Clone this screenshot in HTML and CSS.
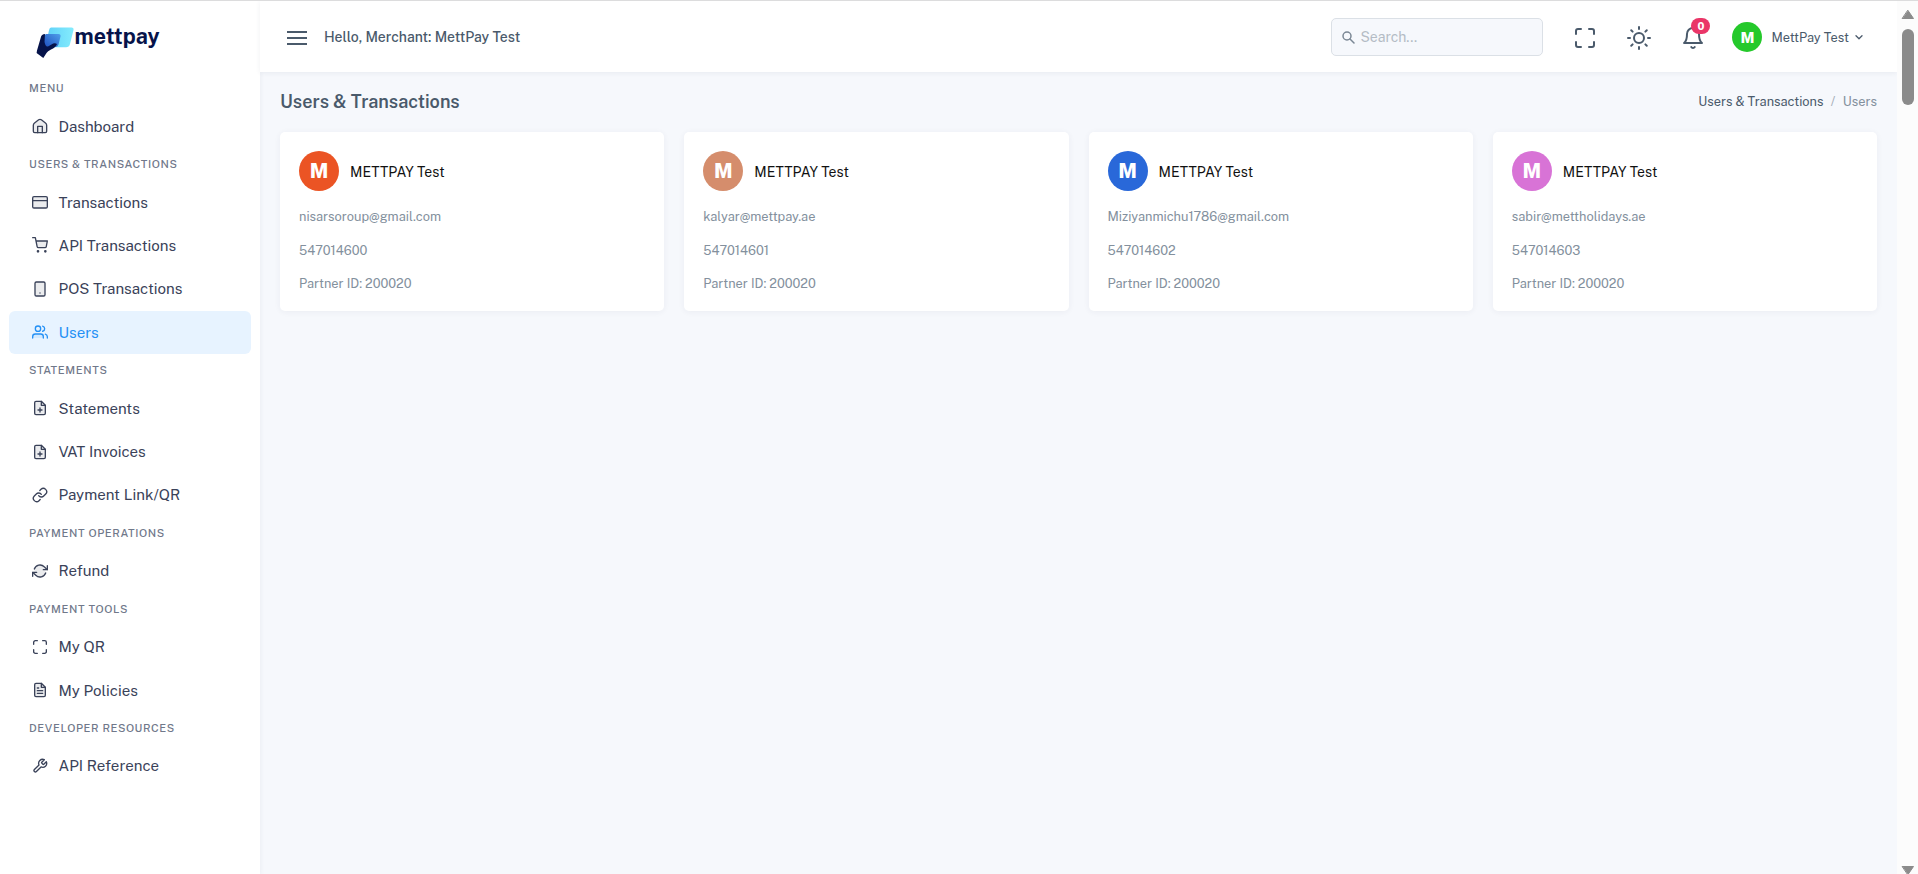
FILE: index.html
```html
<!DOCTYPE html>
<html lang="en">
<head>
    <meta charset="UTF-8">
    <meta name="viewport" content="width=device-width, initial-scale=1.0">
    <title>Users | MettPay</title>
    <link rel="stylesheet" href="styles.css">
</head>
<body>
    <aside class="sidebar">
        <a class="logo" href="#">
            <svg width="140" height="50" viewBox="0 -10 140 50">
                <defs>
                    <linearGradient id="cardBack" x1="0" y1="0" x2="1" y2="0">
                        <stop offset="0" stop-color="#5fd0f8"/>
                        <stop offset="1" stop-color="#84ecfd"/>
                    </linearGradient>
                    <linearGradient id="cardFront" x1="1" y1="0" x2="0" y2="1">
                        <stop offset="0" stop-color="#4f9fea"/>
                        <stop offset="1" stop-color="#1f4fc0"/>
                    </linearGradient>
                </defs>
                <path d="M15 .5h20.500q2.500 0 2 2.500l-3.500 14q-.8 3.300-4 3.300H12q-3 0-2-3l3-14Q13.500.500 15 .5z" fill="url(#cardBack)"/>
                <path d="M10 7H22.500q2.500 0 2 2.500l-2 8q-.800 2.500-3.500 2.500H12Q7.500 20 8 15.500V8.500z" fill="url(#cardFront)"/>
                <path d="M9 7Q5.500 7 4.800 10.500L1 23.500 .6 26l6.700 5 3.200-5q1-2 4.500-3.500 4.500-2 6-5.500-2.500-1.500-5.500.500l-3.500 2Q9.500 20 8.500 15z" fill="#06134a"/>
                <text class="logo-text" x="38.500" y="17" textLength="85" lengthAdjust="spacingAndGlyphs">mettpay</text>
            </svg>
        </a>

        <nav class="menu">
            <h6 class="menu-title">Menu</h6>
            <a class="menu-item" href="#">
                <svg class="icon" viewBox="0 0 24 24"><path class="duo" d="M2 9l10-7 10 7v13H2z"/><path d="M2 11c0-1.500.5-2.500 1.800-3.500L10 2.700q2-1.400 4 0l6.200 4.800C21.500 8.500 22 9.500 22 11v9q0 2-2 2H4q-2 0-2-2z"/><path d="M8.500 22v-9.500h7V22"/></svg>
                <span>Dashboard</span>
            </a>
            <h6 class="menu-title">Users &amp; Transactions</h6>
            <a class="menu-item" href="#">
                <svg class="icon" viewBox="0 0 24 24"><rect class="duo" x="1" y="4" width="22" height="17" rx="2"/><rect x="1" y="4" width="22" height="17" rx="2"/><path d="M1 10h22"/></svg>
                <span>Transactions</span>
            </a>
            <a class="menu-item" href="#">
                <svg class="icon" viewBox="0 0 24 24"><path class="duo" d="M6 6h17l-2 10H8z"/><circle cx="9" cy="21.500" r="1"/><circle cx="20" cy="21.500" r="1"/><path d="M1 1h4l2.700 13.400a2 2 0 0 0 2 1.600h9.700a2 2 0 0 0 2-1.600L23 6H6"/></svg>
                <span>API Transactions</span>
            </a>
            <a class="menu-item" href="#">
                <svg class="icon" viewBox="0 0 24 24"><rect class="duo" x="4.500" y="1.500" width="15" height="21" rx="2"/><rect x="4.500" y="1.500" width="15" height="21" rx="2"/><path d="M12 18h.01"/></svg>
                <span>POS Transactions</span>
            </a>
            <a class="menu-item active" href="#">
                <svg class="icon" viewBox="0 0 24 24"><path class="duo" d="M1 21v-2a4 4 0 0 1 4-4h8a4 4 0 0 1 4 4v2z"/><path d="M17 21v-2a4 4 0 0 0-4-4H5a4 4 0 0 0-4 4v2"/><circle cx="9" cy="7" r="4"/><path d="M23 21v-2a4 4 0 0 0-3-3.870M16 3.130a4 4 0 0 1 0 7.750"/></svg>
                <span>Users</span>
            </a>
            <h6 class="menu-title">Statements</h6>
            <a class="menu-item" href="#">
                <svg class="icon" viewBox="0 0 24 24"><path class="duo" d="M4 2h10l6 6v14H4z"/><path d="M14 2H6a2 2 0 0 0-2 2v16a2 2 0 0 0 2 2h12a2 2 0 0 0 2-2V8z"/><path d="M14 2v6h6M12 18v-6M9 15h6"/></svg>
                <span>Statements</span>
            </a>
            <a class="menu-item" href="#">
                <svg class="icon" viewBox="0 0 24 24"><path class="duo" d="M4 2h10l6 6v14H4z"/><path d="M14 2H6a2 2 0 0 0-2 2v16a2 2 0 0 0 2 2h12a2 2 0 0 0 2-2V8z"/><path d="M14 2v6h6M12 18v-6M9 15h6"/></svg>
                <span>VAT Invoices</span>
            </a>
            <a class="menu-item" href="#">
                <svg class="icon" viewBox="0 0 24 24"><path d="M10 13a5 5 0 0 0 7.540.540l3-3a5 5 0 0 0-7.070-7.070l-1.720 1.710"/><path d="M14 11a5 5 0 0 0-7.540-.540l-3 3a5 5 0 0 0 7.070 7.070l1.710-1.710"/></svg>
                <span>Payment Link/QR</span>
            </a>
            <h6 class="menu-title">Payment Operations</h6>
            <a class="menu-item" href="#">
                <svg class="icon" viewBox="0 0 24 24"><circle class="duo" cx="12" cy="12" r="8.500"/><path d="M23 4v6h-6M1 20v-6h6"/><path d="M3.510 9a9 9 0 0 1 14.850-3.360L23 10M1 14l4.640 4.360A9 9 0 0 0 20.490 15"/></svg>
                <span>Refund</span>
            </a>
            <h6 class="menu-title">Payment Tools</h6>
            <a class="menu-item" href="#">
                <svg class="icon" viewBox="0 0 24 24"><path d="M8 2.500H5A2.500 2.500 0 0 0 2.500 5v3m19 0V5A2.500 2.500 0 0 0 19 2.500h-3m0 19h3a2.500 2.500 0 0 0 2.500-2.500v-3m-19 0v3A2.500 2.500 0 0 0 5 21.500h3"/></svg>
                <span>My QR</span>
            </a>
            <a class="menu-item" href="#">
                <svg class="icon" viewBox="0 0 24 24"><path class="duo" d="M4 2h10l6 6v14H4z"/><path d="M14 2H6a2 2 0 0 0-2 2v16a2 2 0 0 0 2 2h12a2 2 0 0 0 2-2V8z"/><path d="M14 2v6h6M16 13H8M16 17H8M10 9H8"/></svg>
                <span>My Policies</span>
            </a>
            <h6 class="menu-title">Developer Resources</h6>
            <a class="menu-item" href="#">
                <svg class="icon" viewBox="0 0 24 24"><path d="M14.700 6.300a1 1 0 0 0 0 1.400l1.600 1.600a1 1 0 0 0 1.400 0l3.770-3.770a6 6 0 0 1-7.940 7.940l-6.910 6.910a2.120 2.120 0 0 1-3-3l6.910-6.910a6 6 0 0 1 7.940-7.940l-3.760 3.760z"/></svg>
                <span>API Reference</span>
            </a>
        </nav>
    </aside>

    <div class="page">
        <header class="topbar">
            <svg class="burger" width="20" height="14" viewBox="0 0 20 14"><path d="M0 1h20M0 7h20M0 13h20"/></svg>
            <h5 class="hello">Hello, Merchant: MettPay Test</h5>

            <div class="search">
                <svg width="13" height="13" viewBox="0 0 13 13"><circle cx="5" cy="5" r="4"/><path d="M8 8l4 4"/></svg>
                <span>Search...</span>
            </div>
            <svg class="icon top-icon" viewBox="0 0 24 24"><path d="M8 3H5a2 2 0 0 0-2 2v3m18 0V5a2 2 0 0 0-2-2h-3m0 18h3a2 2 0 0 0 2-2v-3M3 16v3a2 2 0 0 0 2 2h3"/></svg>
            <svg class="icon top-icon" viewBox="0 0 24 24"><circle cx="12" cy="12" r="5"/><path d="M12 1v2M12 21v2M4.220 4.220l1.420 1.420M18.360 18.360l1.420 1.420M1 12h2M21 12h2M4.220 19.780l1.420-1.420M18.360 5.640l1.420-1.420"/></svg>
            <div class="bell">
                <svg class="icon top-icon" viewBox="0 0 24 24"><path d="M18 8A6 6 0 0 0 6 8c0 7-3 9-3 9h18s-3-2-3-9"/><path d="M13.730 21a2 2 0 0 1-3.460 0"/></svg>
                <span class="badge">0</span>
            </div>
            <div class="profile">
                <span class="avatar avatar-sm green">M</span>
                <span class="profile-name">MettPay Test</span>
                <svg width="8" height="5" viewBox="0 0 8 5"><path d="M1 .8l3 3 3-3"/></svg>
            </div>
        </header>

        <main class="content">
            <div class="page-head">
                <h4>Users &amp; Transactions</h4>
                <div class="breadcrumb">
                    <a href="#">Users &amp; Transactions</a>
                    <span class="slash">/</span>
                    <span>Users</span>
                </div>
            </div>

            <div class="cards">
                <div class="card">
                    <div class="card-head"><span class="avatar orange">M</span><h5>METTPAY Test</h5></div>
                    <p>nisarsoroup@gmail.com</p>
                    <p>547014600</p>
                    <p>Partner ID: 200020</p>
                </div>
                <div class="card">
                    <div class="card-head"><span class="avatar tan">M</span><h5>METTPAY Test</h5></div>
                    <p>kalyar@mettpay.ae</p>
                    <p>547014601</p>
                    <p>Partner ID: 200020</p>
                </div>
                <div class="card">
                    <div class="card-head"><span class="avatar blue">M</span><h5>METTPAY Test</h5></div>
                    <p>Miziyanmichu1786@gmail.com</p>
                    <p>547014602</p>
                    <p>Partner ID: 200020</p>
                </div>
                <div class="card">
                    <div class="card-head"><span class="avatar pink">M</span><h5>METTPAY Test</h5></div>
                    <p>sabir@mettholidays.ae</p>
                    <p>547014603</p>
                    <p>Partner ID: 200020</p>
                </div>
            </div>
        </main>
    </div>

    <div class="scrollbar">
        <svg width="14" height="11" viewBox="0 0 14 11"><path d="M7 1.500L12.500 9.500h-11z"/></svg>
        <div class="thumb"></div>
        <svg class="down" width="14" height="11" viewBox="0 0 14 11"><path d="M7 9.500L12.500 1.500h-11z"/></svg>
    </div>
</body>
</html>
```
FILE: styles.css
```css
* {
    box-sizing: border-box;
}
body {
    margin: 0;
    height: 100vh;
    display: flex;
    overflow: hidden;
    border-top: 1px solid #dcdcdd;
    background: #f6f8fc;
    font-family: "Public Sans", Inter, sans-serif;
    font-size: 14px;
    color: #4a5a6b;
}
a {
    color: inherit;
    text-decoration: none;
}
h4, h5, h6, p {
    margin: 0;
    font-weight: 400;
}
svg {
    fill: none;
    stroke-linecap: round;
    stroke-linejoin: round;
    flex-shrink: 0;
}

/* sidebar */
.sidebar {
    width: 260px;
    flex-shrink: 0;
    background: #fff;
    box-shadow: 0 1px 5px rgba(45, 55, 90, 0.07);
}
.logo {
    display: block;
    height: 71px;
    padding: 16px 0 0 36px;
}
.logo svg {
    display: block;
}
.logo-text {
    font-size: 23px;
    font-weight: 700;
    fill: #06134a;
}
.menu-title {
    height: 32.5px;
    line-height: 32px;
    padding-left: 29px;
    font-size: 11px;
    font-weight: 500;
    letter-spacing: 0.6px;
    text-transform: uppercase;
    color: #70788a;
}
.menu-item {
    display: flex;
    align-items: center;
    gap: 10.5px;
    height: 43.4px;
    margin: 0 9px;
    padding-left: 23px;
    border-radius: 6px;
    font-size: 15.1px;
    color: #3a4259;
}
.menu-item.active {
    background: #e7f3ff;
    color: #2490f5;
}
.icon {
    width: 16px;
    height: 16px;
    stroke: currentColor;
    stroke-width: 2;
}
.duo {
    fill: currentColor;
    fill-opacity: 0.1;
    stroke: none;
}

/* topbar */
.page {
    flex: 1;
    min-width: 0;
}
.topbar {
    display: flex;
    align-items: center;
    height: 71px;
    padding: 1px 34px 0 27px;
    background: #fff;
    box-shadow: 0 1px 5px rgba(45, 55, 90, 0.07);
}
.burger {
    stroke: #4a5a6b;
    stroke-width: 2;
    stroke-linecap: butt;
    margin-top: 2px;
}
.hello {
    margin-left: 17px;
    font-size: 14px;
    font-weight: 500;
}
.search {
    display: flex;
    align-items: center;
    gap: 5px;
    width: 212px;
    height: 38px;
    margin: 0 30px 0 auto;
    padding-left: 10px;
    border: 1px solid #dbe0e6;
    border-radius: 5px;
    background: #f6f8fc;
    color: #b4bcc5;
}
.search svg {
    stroke: #7a8794;
    stroke-width: 1.5;
}
.top-icon {
    display: block;
    width: 24px;
    height: 24px;
    margin-top: 2px;
    margin-right: 30px;
}
.bell {
    position: relative;
}
.bell .top-icon {
    margin-right: 27px;
}
.badge {
    position: absolute;
    left: 10px;
    top: -6px;
    width: 19px;
    height: 16px;
    border-radius: 8px;
    background: #ea3668;
    color: #fff;
    font-size: 10.5px;
    font-weight: 800;
    line-height: 16px;
    text-align: center;
}
.profile {
    display: flex;
    align-items: center;
}
.profile svg {
    margin-left: 6px;
    stroke: #4a5a6b;
    stroke-width: 1.3;
}
.profile-name {
    margin-left: 9px;
    font-size: 12.8px;
}

/* avatars */
.avatar {
    display: flex;
    align-items: center;
    justify-content: center;
    width: 40px;
    height: 40px;
    border-radius: 50%;
    color: #fff;
    font-size: 20px;
    font-weight: 800;
}
.avatar-sm {
    width: 30px;
    height: 30px;
    font-size: 15px;
}
.green { background: #25c92b; }
.orange { background: #eb5424; }
.tan { background: #d58d6c; }
.blue { background: #2968d9; }
.pink { background: #d873d6; }

/* content */
.content {
    padding: 0 20px;
}
.page-head {
    display: flex;
    align-items: center;
    justify-content: space-between;
    height: 60px;
    padding-bottom: 1px;
}
.page-head h4 {
    font-size: 18px;
    font-weight: 600;
}
.breadcrumb {
    display: flex;
    gap: 7.5px;
    font-size: 12.8px;
    color: #83909d;
}
.breadcrumb a {
    color: #4a5a6b;
}
.slash {
    color: #a4adb7;
}
.cards {
    display: grid;
    grid-template-columns: repeat(4, 1fr);
    gap: 20px;
}
.card {
    height: 179px;
    padding: 19px;
    border-radius: 5px;
    background: #fff;
    box-shadow: 0 1px 6px rgba(45, 55, 90, 0.06);
}
.card-head {
    display: flex;
    align-items: center;
    gap: 11px;
    margin-bottom: 8px;
}
.card-head h5 {
    padding-top: 1px;
    font-size: 14px;
    color: #111;
}
.card p {
    height: 33.5px;
    line-height: 35px;
    font-size: 12.8px;
    color: #83909d;
}

/* page scrollbar */
.scrollbar {
    display: flex;
    flex-direction: column;
    align-items: center;
    width: 21px;
    padding: 8px 0 0 1px;
    background: #fcfcfc;
}
.scrollbar svg {
    fill: #8b8b8b;
    stroke: #8b8b8b;
}
.thumb {
    width: 12px;
    height: 76px;
    margin-top: 9px;
    border-radius: 6px;
    background: #8b8b8b;
}
.scrollbar .down {
    margin-top: auto;
    margin-bottom: -2px;
}
```
